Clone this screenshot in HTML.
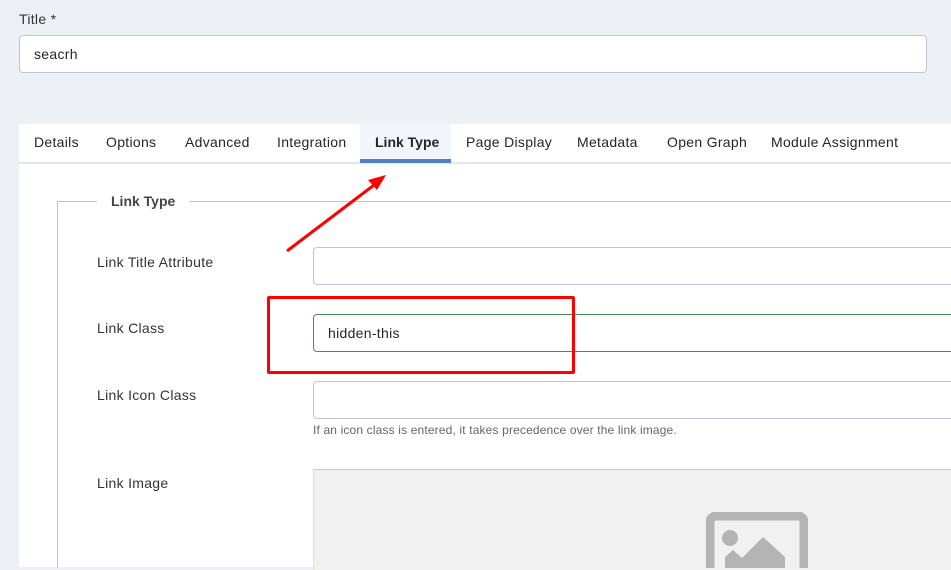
<!DOCTYPE html>
<html><head><meta charset="utf-8"><style>
body{margin:0;width:951px;height:567px;overflow:hidden;background:#edf1f6;font-family:"Liberation Sans",sans-serif;color:#22262a;position:relative}
.a{position:absolute}
.t{font-size:14px;white-space:nowrap;letter-spacing:0.3px}
.inp{position:absolute;background:#fff;border:1px solid #b8c6db;border-radius:4px;box-sizing:border-box}
</style></head><body>
<div class="a t" style="left:19px;top:11px;font-size:14px;color:#333">Title *</div>
<div class="inp" style="left:19px;top:35px;width:908px;height:38px"><span class="a t" style="left:14px;top:10px">seacrh</span></div>
<div class="a" style="left:19px;top:124px;width:932px;height:443px;background:#fff"></div>
<div class="a" style="left:19px;top:162px;width:932px;height:2px;background:#e1e7ef"></div>
<div class="a" style="left:360px;top:124px;width:91px;height:39px;background:#f2f5f9"></div>
<div class="a" style="left:360px;top:159px;width:91px;height:4px;background:#4f82c6"></div>
<div class="a t" style="left:34px;top:134px">Details</div>
<div class="a t" style="left:106px;top:134px">Options</div>
<div class="a t" style="left:185px;top:134px">Advanced</div>
<div class="a t" style="left:277px;top:134px">Integration</div>
<div class="a t" style="left:375px;top:134px;font-weight:bold;letter-spacing:0">Link Type</div>
<div class="a t" style="left:466px;top:134px">Page Display</div>
<div class="a t" style="left:577px;top:134px">Metadata</div>
<div class="a t" style="left:667px;top:134px">Open Graph</div>
<div class="a t" style="left:771px;top:134px">Module Assignment</div>
<div class="a" style="left:57px;top:201px;width:894px;height:366px;border-left:1px solid #b8c6db;border-top:1px solid #b8c6db"></div>
<div class="a t" style="left:97px;top:193px;padding:0 14px;background:#fff;font-weight:bold;color:#444;letter-spacing:0">Link Type</div>
<div class="a t" style="left:97px;top:254px;color:#333">Link Title Attribute</div>
<div class="a t" style="left:97px;top:320px;color:#333">Link Class</div>
<div class="a t" style="left:97px;top:387px;color:#333">Link Icon Class</div>
<div class="a t" style="left:97px;top:475px;color:#333">Link Image</div>
<div class="inp" style="left:313px;top:247px;width:660px;height:38px"></div>
<div class="inp" style="left:313px;top:314px;width:660px;height:38px;border-color:#4a8a55"><span class="a t" style="left:14px;top:10px">hidden-this</span></div>
<div class="inp" style="left:313px;top:381px;width:660px;height:38px"></div>
<div class="a" style="left:313px;top:423px;font-size:12px;color:#666;white-space:nowrap;letter-spacing:0.15px">If an icon class is entered, it takes precedence over the link image.</div>
<div class="a" style="left:313px;top:469px;width:640px;height:100px;background:#f1f1f1;border-top:1px solid #ccc;border-left:1px solid #ddd"></div>
<svg class="a" style="left:706px;top:512px" width="102" height="56"><rect x="4" y="4" width="94" height="60" rx="6" fill="none" stroke="#b4b4b4" stroke-width="9"/><circle cx="24" cy="26" r="8" fill="#b4b4b4"/><path d="M19 56 L19 45 L27 38 L36 46 L57 25 L79 45 L79 56Z" fill="#b4b4b4"/></svg>
<div class="a" style="left:267px;top:296px;width:302px;height:72px;border:3px solid #f00;border-radius:2px"></div>
<svg class="a" style="left:280px;top:170px" width="120" height="90"><line x1="7" y1="81" x2="98" y2="12" stroke="#f00" stroke-width="3"/><path d="M106 5 L88 10 L97 20Z" fill="#f00"/></svg>
</body></html>
